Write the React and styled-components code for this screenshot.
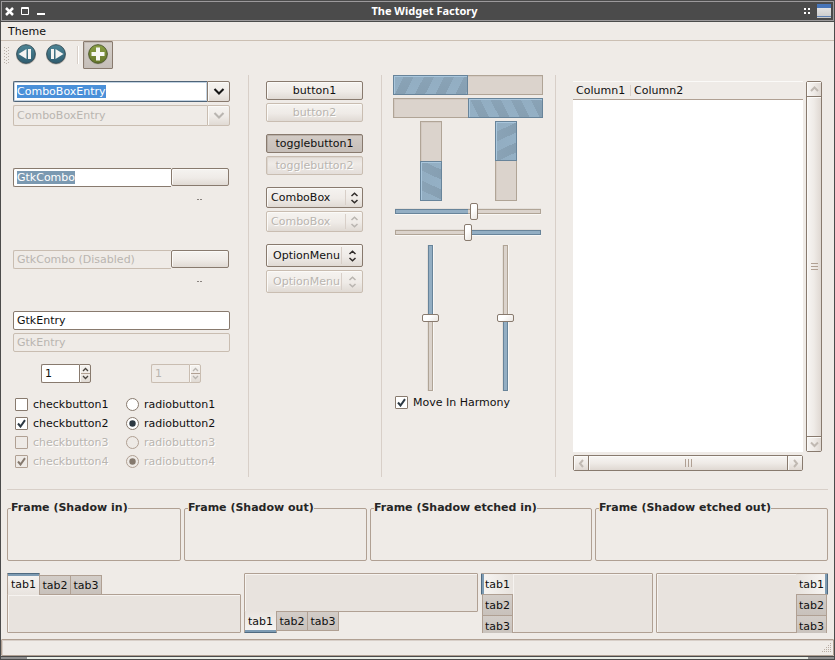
import React from "react";
import styled, { createGlobalStyle, css } from "styled-components";

const c = {
  bg: "#efebe7",
  frame: "#4b4b4b",
  edge: "#887a6e",
  edgeSoft: "#b0a093",
  edgeOff: "#c9bdb1",
  line: "#d8cfc8",
  off: "#b9b5b0",
  text: "#101010",
  blue: "#93aec3",
  blueEdge: "#68849a",
  trough: "#dbd3cc",
  troughEdge: "#b0a496",
};

const Global = createGlobalStyle`
  * { box-sizing: border-box; }
  body { margin: 0; background: ${c.bg}; }
  body, button, input, select, table {
    font-family: "DejaVu Sans", Verdana, sans-serif;
    font-size: 11px;
    line-height: 15px;
    color: ${c.text};
  }
  button, input, select { margin: 0; padding: 0; border: 0; outline: 0; opacity: 1; }
  svg { display: block; }
`;

const Window = styled.div`
  display: flex;
  flex-direction: column;
  min-height: 100vh;
  background: ${c.bg};
`;

const Inside = styled.div`
  flex: 1;
  display: flex;
  flex-direction: column;
  border: solid ${c.frame};
  border-width: 0 1px;
`;

/* ---------- title bar ---------- */

const TitleBar = styled.header`
  display: flex;
  align-items: center;
  height: 22px;
  padding: 0 2px 0 4px;
  background: ${c.frame};
  border: 1px solid ${c.frame};
  box-shadow: inset 0 0 0 1px #9c9a9c;
`;

const Title = styled.h1`
  flex: 1;
  margin: 0;
  padding-right: 4px;
  text-align: center;
  font: bold 11px/18px "Noto Sans", "Open Sans", sans-serif;
  color: #fff;
`;

const TitleButton = styled.button`
  display: flex;
  background: none;
  width: ${(p) => p.$w}px;
`;

/* ---------- menu and tool bar ---------- */

const MenuBar = styled.nav`
  display: flex;
  height: 19px;
  padding: 1px 7px;
  border-bottom: 1px solid #cbbfb3;
`;

const MenuItem = styled.button`
  background: none;
  font-size: 11px;
`;

const ToolBar = styled.div`
  display: flex;
  height: 29px;
  padding-left: 3px;
`;

const ToolButton = styled.button`
  width: 30px;
  display: flex;
  justify-content: center;
  background: none;
  height: 28px;
  padding-top: 2px;
  ${(p) =>
    p.$on &&
    css`
      padding-top: 1px;
      border: 1px solid ${c.edge};
      border-radius: 1px;
      background: linear-gradient(#d6d0cb, #c5beb8);
      box-shadow: inset 1px 1px 0 #c2bab3;
    `}
`;

const ToolSeparator = styled.div`
  width: 2px;
  height: 18px;
  margin: 5px 4px 0 6px;
  border-left: 1px solid ${c.line};
  border-right: 1px solid #fff;
`;

/* ---------- main area ---------- */

const Content = styled.main`
  flex: 1;
  display: flex;
  flex-direction: column;
  padding: 5px 6px 6px;
`;

const Columns = styled.div`
  flex: 1;
  display: grid;
  grid-template-columns: 241fr 1px 132fr 1px 173fr 1px 272fr;
`;

const Divider = styled.div`
  background: ${c.line};
`;

const Column = styled.section`
  display: flex;
  flex-direction: column;
  min-width: 0;
  gap: ${(p) => p.$gap || 0}px;
  padding: ${(p) => p.$pad};
`;

const Group = styled.div`
  display: flex;
  flex-direction: column;
  gap: 3px;
`;

const off = css`
  color: ${c.off};
  text-shadow: 1px 1px 0 #fff;
`;

const raised = css`
  border: 1px solid ${(p) => (p.disabled ? c.edgeOff : c.edge)};
  border-radius: 2px;
  background: linear-gradient(#f5f3f0, #efebe7 55%, #e0dad4);
  box-shadow: inset 1px 1px 0 #fbfaf8;
`;

const Field = styled.div`
  display: flex;
  align-items: center;
  flex: 1;
  min-width: 0;
  height: ${(p) => p.$h || 19}px;
  padding: 0 3px;
  border: 1px solid ${(p) => (p.$off ? c.edgeOff : p.$focus ? "#4f6478" : c.edge)};
  border-radius: 2px;
  background: ${(p) => (p.$off ? c.bg : "#fff")};
  ${(p) => p.$focus && css`box-shadow: inset 0 0 0 1px #c3d3e2;`}
  ${(p) => p.$joined && css`border-right: 0; border-radius: 2px 0 0 2px;`}
`;

const TextInput = styled.input`
  height: 13px;
  line-height: 13px;
  min-width: 0;
  flex: ${(p) => (p.$mark ? "none" : 1)};
  width: 100%;
  background: none;
  &:disabled { color: ${c.off}; }
  ${(p) =>
    p.$mark &&
    css`
      width: auto;
      field-sizing: content;
      background: ${p.$mark};
      color: #fff;
    `}
`;

const ComboRow = styled.div`
  display: flex;
`;

const ComboButton = styled.button`
  ${raised}
  display: grid;
  place-items: center;
  width: ${(p) => p.$w || 23}px;
  border-radius: 0 2px 2px 0;
`;

const LegacyCombo = styled.div`
  display: grid;
  grid-template-columns: 158fr 58fr;
  padding-right: 1px;
`;

const LegacyButton = styled.button`
  ${raised}
  height: 18px;
`;

const LegacyArrow = styled.div`
  grid-column: 2;
  display: flex;
  justify-content: center;
  padding-top: 12px;
`;

const SpinRow = styled.div`
  display: grid;
  grid-template-columns: 110px 50px;
  padding: 12px 28px 14px;
`;

const Spin = styled.div`
  display: flex;
  width: 50px;
`;

const Choices = styled.div`
  display: grid;
  grid-template-columns: 111px 1fr;
  row-gap: 4px;
  padding-left: 2px;
`;

const ChoiceLabel = styled.label`
  display: flex;
  align-items: center;
  gap: 5px;
  height: 15px;
  white-space: nowrap;
  ${(p) => p.$off && off}
`;

const MarkBox = styled.span`
  display: grid;
  place-items: center;
  width: 13px;
  height: 13px;
  > * { grid-area: 1 / 1; }
  > svg { pointer-events: none; }
`;

const ChoiceInput = styled.input`
  appearance: none;
  width: 13px;
  height: 13px;
  border: 1px solid ${c.edge};
  border-radius: ${(p) => (p.type === "radio" ? "50%" : "1px")};
  background: #fff;
  &:disabled { background: #eeeae6; border-color: ${c.edgeSoft}; }
`;

const Button = styled.button`
  ${raised}
  height: 19px;
  line-height: 16px;
  ${(p) => p.$on && css`
    background: linear-gradient(#d3ccc6, #c6beb8);
    box-shadow: inset 1px 1px 0 #b9b0a8;
  `}
  ${(p) => p.$pressed && css`
    background: linear-gradient(#e6e0db, #efebe7 40%, #e4deda);
    box-shadow: inset 1px 1px 0 #ddd6cf;
  `}
  ${(p) => p.disabled && off}
`;

const SelectBox = styled.div`
  ${raised}
  display: grid;
  grid-template-columns: 1fr auto;
  height: ${(p) => p.$h}px;
`;

const Select = styled.select`
  grid-area: 1 / 1 / 2 / 3;
  appearance: none;
  min-width: 0;
  padding-left: ${(p) => p.$indent}px;
  background: none;
  &:disabled { ${off} opacity: 1; }
`;

const SelectArrows = styled.span`
  grid-area: 1 / 2;
  display: grid;
  place-items: center;
  width: ${(p) => p.$w}px;
  margin: 2px 0;
  border-left: 1px solid ${c.line};
  pointer-events: none;
`;

/* ---------- progress bars and scales ---------- */

const stripes = {
  right: "117deg",
  left: "63deg",
  up: "25deg",
  down: "155deg",
};

const flow = { right: "row", left: "row-reverse", up: "column-reverse", down: "column" };

const Progress = styled.div`
  display: flex;
  flex-direction: ${(p) => flow[p.$dir]};
  width: ${(p) => (p.$tall ? "22px" : "100%")};
  height: ${(p) => (p.$tall ? 80 : 20)}px;
  background: ${c.trough};
  box-shadow: inset 0 0 0 1px ${c.troughEdge}, inset 2px 2px 0 #d3c9c1;
`;

const ProgressFill = styled.div`
  flex: 0 0 50%;
  border: 1px solid ${c.blueEdge};
  box-shadow: inset 1px 1px 0 #a9c6dc;
  background:
    linear-gradient(${(p) => (p.$tall ? "90deg" : "180deg")}, #8fa9bd66, transparent),
    repeating-linear-gradient(${(p) => stripes[p.$dir]}, #94b0c5 0 9px, #869fb2 9px 18px);
`;

const Pair = styled.div`
  display: grid;
  grid-template-columns: 1fr 1fr;
  justify-items: center;
`;

const Scale = styled.input`
  appearance: none;
  display: block;
  background-color: transparent;
  background-repeat: no-repeat;
  background-position: center;
  ${(p) =>
    p.$tall
      ? css`
          writing-mode: vertical-lr;
          width: 17px;
          height: 146px;
          background-image:
            linear-gradient(${p.$a} 50%, ${p.$b} 50%),
            linear-gradient(${p.$ae} 50%, ${p.$be} 50%),
            linear-gradient(90deg, #e2ddd8, #fbfaf8);
          background-size: 3px calc(100% - 2px), 5px 100%, 7px 100%;
        `
      : css`
          width: 100%;
          height: 17px;
          background-image:
            linear-gradient(90deg, ${p.$a} 50%, ${p.$b} 50%),
            linear-gradient(90deg, ${p.$ae} 50%, ${p.$be} 50%),
            linear-gradient(#e2ddd8, #fbfaf8);
          background-size: calc(100% - 2px) 3px, 100% 5px, 100% 7px;
        `}
  &::-webkit-slider-thumb {
    appearance: none;
    width: ${(p) => (p.$tall ? 17 : 8)}px;
    height: ${(p) => (p.$tall ? 8 : 17)}px;
    border: 1px solid ${c.edge};
    border-radius: 2px;
    background: linear-gradient(135deg, #fff 40%, #ebe6e1);
  }
`;

/* ---------- tree view ---------- */

const TreeGrid = styled.div`
  flex: 1;
  display: grid;
  grid-template-columns: 1fr 16px;
  grid-template-rows: 1fr 16px;
  gap: 3px;
`;

const TreePane = styled.div`
  min-height: 371px;
  background: #fff;
`;

const TreeTable = styled.table`
  width: 100%;
  border-collapse: collapse;
  background: ${c.bg};
  box-shadow: inset 0 1px 0 #fbfaf8, inset 0 -1px 0 ${c.edgeSoft};
`;

const Th = styled.th`
  height: 19px;
  padding: 0 0 0 3px;
  font-weight: normal;
  text-align: left;
  width: ${(p) => p.$w || "auto"};
  background: ${(p) =>
    p.$w ? `linear-gradient(${c.line}, ${c.line}) right center / 1px 11px no-repeat` : "none"};
`;

const ScrollBar = styled.div`
  display: flex;
  flex-direction: ${(p) => (p.$tall ? "column" : "row")};
  border: 1px solid ${c.edge};
  border-radius: 2px;
`;

const grad = (tall) =>
  `linear-gradient(${tall ? "90deg" : "180deg"}, #f7f5f3, #efebe7 50%, #dfd8d2)`;

const ScrollButton = styled.button`
  display: grid;
  place-items: center;
  flex: 0 0 14px;
  background: ${(p) => grad(p.$tall)};
  box-shadow: inset 1px 1px 0 #fbfaf8;
`;

const ScrollThumb = styled.div`
  flex: 1;
  display: grid;
  place-items: center;
  border: solid ${c.edge};
  border-width: ${(p) => (p.$tall ? "1px 0" : "0 1px")};
  background: ${(p) => grad(p.$tall)};
  box-shadow: inset 1px 1px 0 #fbfaf8;
`;

/* ---------- frames, notebooks, status ---------- */

const Rule = styled.hr`
  width: 100%;
  height: 1px;
  margin: 12px 0 10px;
  border: 0;
  background: ${c.line};
`;

const Frames = styled.div`
  display: grid;
  grid-template-columns: 174fr 183fr 222fr 233fr;
  gap: 3px;
`;

const Frame = styled.fieldset`
  min-width: 0;
  height: 61px;
  margin: 0;
  padding: 0 3px;
  border: 1px solid ${c.edgeSoft};
  border-radius: 2px;
`;

const Legend = styled.legend`
  padding: 0 0 2px;
  line-height: 15px;
  font-weight: bold;
  color: #262626;
  white-space: nowrap;
`;

const Notebooks = styled.div`
  display: grid;
  grid-template-columns: 234fr 234fr 172fr 172fr;
  gap: 3px;
  margin-top: 12px;
`;

const bookFlow = { top: "column", bottom: "column-reverse", left: "row", right: "row-reverse" };

const Notebook = styled.div`
  display: flex;
  flex-direction: ${(p) => bookFlow[p.$side]};
  height: 60px;
`;

const Page = styled.div`
  flex: 1;
  border: 1px solid ${c.edgeSoft};
  border-radius: 1px;
  background: #e8e3de;
  box-shadow: inset 1px 1px 0 #f6f3f0;
`;

const listSide = {
  top: css`align-items: flex-end; margin-bottom: -1px;`,
  bottom: css`align-items: flex-start; margin-top: -1px;`,
  left: css`flex-direction: column; align-items: flex-end; margin-right: -1px; overflow: hidden;`,
  right: css`flex-direction: column; align-items: flex-start; margin-left: -1px; overflow: hidden;`,
};

const TabList = styled.div`
  display: flex;
  z-index: 1;
  ${(p) => listSide[p.$side]}
`;

const opposite = { top: "bottom", bottom: "top", left: "right", right: "left" };

const accent = { top: "0 2px", bottom: "0 -2px", left: "2px 0", right: "-2px 0" };

const Tab = styled.button`
  flex: none;
  white-space: nowrap;
  border: 1px solid ${c.edgeSoft};
  background: linear-gradient(#d3cdc8, #c8c1bb);
  ${(p) => {
    const vertical = p.$side === "left" || p.$side === "right";
    const first = p.$on
      ? css`
          border-${p.$side}: 1px solid #4f6a80;
          border-${opposite[p.$side]}: 0;
          border-radius: 1px;
          background: linear-gradient(to ${opposite[p.$side]}, #f7f5f3, #e8e3de);
          box-shadow: inset ${accent[p.$side]} 0 #7d9bb3;
        `
      : "";
    return vertical
      ? css`
          width: ${p.$on ? 32 : 31}px;
          height: 22px;
          margin-top: ${p.$on ? 0 : -1}px;
          ${first}
        `
      : css`
          width: ${p.$on ? 33 : p.$after ? 31 : 32}px;
          height: ${p.$on ? 22 : 20}px;
          margin-right: ${p.$on ? 0 : -1}px;
          border-left-width: ${p.$after ? 0 : 1}px;
          ${first}
        `;
  }}
`;

const StatusBar = styled.footer`
  display: flex;
  justify-content: flex-end;
  align-items: flex-end;
  height: 17px;
  padding: 0 1px 1px 0;
  border: 1px solid ${c.edgeSoft};
  border-radius: 1px;
  box-shadow: inset 1px 1px 0 ${c.line};
`;

const ResizeEdge = styled.div`
  display: flex;
  justify-content: space-between;
  height: 4px;
  border: 1px solid ${c.frame};
  background: #e9ede6;
`;

const Corner = styled.span`
  width: 26px;
  background: #8f8f8f;
`;

/* ---------- drawings ---------- */

const paths = {
  up: "M1 5L4.500 1.500L8 5",
  down: "M1 1.500L4.500 5L8 1.500",
};

function Chevron({ dir = "down", tone = "#151515", w = 9, h = 7, stroke = 2 }) {
  return (
    <svg width={w} height={h} viewBox="0 0 9 7" aria-hidden="true">
      <path d={paths[dir]} fill="none" stroke={tone} strokeWidth={stroke} />
    </svg>
  );
}

function SideChevron({ dir }) {
  return (
    <svg width="7" height="9" viewBox="0 0 7 9" aria-hidden="true">
      <path d={dir === "left" ? "M5 1L2 4.500L5 8" : "M2 1L5 4.500L2 8"} fill="none" stroke="#c0b9b2" strokeWidth="2" />
    </svg>
  );
}

function UpDown({ tone, small }) {
  return small ? (
    <svg width="9" height="17" viewBox="0 0 9 17" aria-hidden="true">
      <path d="M2 6L4.500 3.500L7 6M2 11L4.500 13.500L7 11" fill="none" stroke={tone} strokeWidth="1.300" />
      <path d="M0 8.500H9" stroke={c.edgeSoft} />
    </svg>
  ) : (
    <svg width="9" height="12" viewBox="0 0 9 12" aria-hidden="true">
      <path d="M1.500 4L4.500 1.200L7.500 4M1.500 8L4.500 10.800L7.500 8" fill="none" stroke={tone} strokeWidth="1.500" />
    </svg>
  );
}

function ToolIcon({ kind }) {
  const green = kind === "add";
  const id = "orb-" + kind;
  return (
    <svg width="22" height="22" viewBox="0 0 22 22" aria-hidden="true">
      <defs>
        <linearGradient id={id} x1="0" y1="0" x2="0" y2="1">
          <stop offset="0" stopColor={green ? "#8ba044" : "#4d8596"} />
          <stop offset="1" stopColor={green ? "#64752a" : "#2f5d70"} />
        </linearGradient>
      </defs>
      <ellipse cx="11" cy="12" rx="10" ry="9.500" fill="#b8b2ab" />
      <circle cx="11" cy="11" r="9.300" fill={`url(#${id})`} stroke={green ? "#4e5a2b" : "#35505b"} />
      {kind === "back" && (
        <g fill="#f4f4f2"><path d="M11.500 6V16L3.500 11Z" /><rect x="13" y="6" width="3" height="10" /></g>
      )}
      {kind === "forward" && (
        <g fill="#f4f4f2"><path d="M10.500 6V16L18.500 11Z" /><rect x="6" y="6" width="3" height="10" /></g>
      )}
      {green && <path d="M9 4.500H13V9H17.500V13H13V17.500H9V13H4.500V9H9Z" fill="#f7f7f3" />}
    </svg>
  );
}

function DotHandle() {
  const rows = [0, 3, 6, 9, 12, 15];
  return (
    <svg width="6" height="18" viewBox="0 0 6 18" aria-hidden="true">
      {rows.map((y) => (
        <g key={y} fill="#b9b0a8">
          <rect x="0" y={y} width="1" height="1" />
          <rect x="4" y={y} width="1" height="1" />
          <rect x="2" y={y + 1} width="1" height="1" />
        </g>
      ))}
    </svg>
  );
}

const HandleArea = styled.div`
  width: 7px;
  padding-top: 6px;
`;

const Grip = ({ tall }) => (
  <svg width={tall ? 7 : 9} height="8" aria-hidden="true">
    <path
      d={tall ? "M0 .5H7M0 3.500H7M0 6.500H7" : "M1.500 0V8M4.500 0V8M7.500 0V8"}
      stroke={c.edgeSoft}
    />
  </svg>
);

function ResizeGrip() {
  const dots = [];
  for (let r = 0; r < 5; r++) for (let k = 0; k <= r; k++) dots.push([10 - k * 2, r * 2 + 1]);
  return (
    <svg width="12" height="12" viewBox="0 0 12 12" aria-hidden="true">
      {dots.map(([x, y]) => (
        <rect key={x + "-" + y} x={x} y={y} width="1" height="1" fill="#b9aea4" />
      ))}
    </svg>
  );
}

/* ---------- composed parts ---------- */

function Choice({ type = "checkbox", name, checked, disabled, children }) {
  const tone = disabled ? "#85796e" : "#2d3943";
  return (
    <ChoiceLabel $off={disabled}>
      <MarkBox>
        <ChoiceInput type={type} name={name} defaultChecked={checked} disabled={disabled} />
        {checked &&
          (type === "radio" ? (
            <svg width="7" height="7" aria-hidden="true"><circle cx="3.500" cy="3.500" r="3.200" fill={tone} /></svg>
          ) : (
            <svg width="9" height="9" viewBox="0 0 9 9" aria-hidden="true">
              <path d="M1 4.500L3.500 7.500L8 1.200" fill="none" stroke={tone} strokeWidth="2" />
            </svg>
          ))}
      </MarkBox>
      {children}
    </ChoiceLabel>
  );
}

function Combo({ value, disabled, focus }) {
  return (
    <ComboRow>
      <Field $h={21} $off={disabled} $focus={focus} $joined>
        <TextInput aria-label={value} defaultValue={value} disabled={disabled} $mark={focus && "#4a90d9"} />
      </Field>
      <ComboButton disabled={disabled} aria-label="Open list">
        <Chevron tone={disabled ? c.off : "#151515"} w={12} h={9} stroke={1.6} />
      </ComboButton>
    </ComboRow>
  );
}

function OldCombo({ value, disabled, mark }) {
  return (
    <LegacyCombo>
      <Field $off={disabled} $joined>
        <TextInput aria-label={value} defaultValue={value} disabled={disabled} $mark={mark} />
      </Field>
      <LegacyButton aria-label="Open list" />
      <LegacyArrow>
        <svg width="6" height="2" aria-hidden="true"><path d="M0 .5H2M3 .5H5" stroke="#8a8480" /></svg>
      </LegacyArrow>
    </LegacyCombo>
  );
}

function SpinBox({ disabled }) {
  return (
    <Spin>
      <Field $off={disabled} $joined>
        <TextInput aria-label="Amount" defaultValue="1" inputMode="numeric" disabled={disabled} />
      </Field>
      <ComboButton $w={12} disabled={disabled} aria-label="Step">
        <UpDown small tone={disabled ? c.off : "#4a4540"} />
      </ComboButton>
    </Spin>
  );
}

function Picker({ value, disabled, h, indent, arrows }) {
  return (
    <SelectBox $h={h} disabled={disabled}>
      <Select aria-label={value} disabled={disabled} $indent={indent}>
        <option>{value}</option>
      </Select>
      <SelectArrows $w={arrows}>
        <UpDown tone={disabled ? c.off : "#302c2a"} />
      </SelectArrows>
    </SelectBox>
  );
}

function Bar({ dir, tall }) {
  return (
    <Progress $dir={dir} $tall={tall} role="progressbar" aria-valuenow={50}>
      <ProgressFill $dir={dir} $tall={tall} />
    </Progress>
  );
}

const filled = { $a: c.blue, $b: c.trough, $ae: c.blueEdge, $be: c.troughEdge };
const inverse = { $a: c.trough, $b: c.blue, $ae: c.troughEdge, $be: c.blueEdge };

function Book({ side }) {
  return (
    <Notebook $side={side}>
      <TabList $side={side} role="tablist">
        <Tab $side={side} $on role="tab" aria-selected="true">tab1</Tab>
        <Tab $side={side} $after role="tab">tab2</Tab>
        <Tab $side={side} role="tab">tab3</Tab>
      </TabList>
      <Page role="tabpanel" />
    </Notebook>
  );
}

const ScaleStack = styled.div`
  display: flex;
  flex-direction: column;
  gap: 4px;
  padding: 2px 2px 4px;
`;

const HarmonyRow = styled.div`
  padding: 4px 2px 0;
`;

const frames = ["Frame (Shadow in)", "Frame (Shadow out)", "Frame (Shadow etched in)", "Frame (Shadow etched out)"];

export default function App() {
  return (
    <Window>
      <Global />
      <TitleBar>
        <TitleButton $w={16} aria-label="Close">
          <svg width="9" height="9"><path d="M1 1L8 8M8 1L1 8" stroke="#fff" strokeWidth="2.500" /></svg>
        </TitleButton>
        <TitleButton $w={16} aria-label="Maximize">
          <svg width="9" height="9"><path d="M.5 .5H7.500V7.500H.5ZM0 1.500H8" fill="none" stroke="#fff" /></svg>
        </TitleButton>
        <TitleButton $w={12} aria-label="Minimize">
          <svg width="9" height="9"><path d="M0 7H8" stroke="#fff" strokeWidth="2" /></svg>
        </TitleButton>
        <Title>The Widget Factory</Title>
        <TitleButton $w={13} aria-label="All desktops">
          <svg width="7" height="7"><path d="M0 1H2M4 1H6M0 5H2M4 5H6" stroke="#fff" strokeWidth="2" /></svg>
        </TitleButton>
        <TitleButton $w={15} aria-label="Window menu">
          <svg width="14" height="14">
            <defs>
              <linearGradient id="pane" x1="0" y1="0" x2="0" y2="1">
                <stop offset="0" stopColor="#ececec" />
                <stop offset="1" stopColor="#c9c9c9" />
              </linearGradient>
            </defs>
            <rect width="14" height="14" fill="url(#pane)" />
            <rect width="14" height="4" fill="#4674b8" />
            <rect y="12" width="14" height="1" fill="#5f82b4" />
          </svg>
        </TitleButton>
      </TitleBar>

      <Inside>
        <MenuBar><MenuItem>Theme</MenuItem></MenuBar>
        <ToolBar>
          <HandleArea><DotHandle /></HandleArea>
          <ToolButton aria-label="Back"><ToolIcon kind="back" /></ToolButton>
          <ToolButton aria-label="Forward"><ToolIcon kind="forward" /></ToolButton>
          <ToolSeparator />
          <ToolButton $on aria-label="Add" aria-pressed="true"><ToolIcon kind="add" /></ToolButton>
        </ToolBar>

        <Content>
          <Columns>
            <Column $pad="6px 18px 6px 6px">
              <Group>
                <Combo value="ComboBoxEntry" focus />
                <Combo value="ComboBoxEntry" disabled />
              </Group>
              <Column $pad="42px 0 0" $gap={49}>
                <OldCombo value="GtkCombo" mark="#7b99b1" />
                <OldCombo value="GtkCombo (Disabled)" disabled />
              </Column>
              <Column $pad="28px 0 0" $gap={3}>
                <ComboRow><Field><TextInput aria-label="Entry" defaultValue="GtkEntry" /></Field></ComboRow>
                <ComboRow><Field $off><TextInput aria-label="Entry, disabled" defaultValue="GtkEntry" disabled /></Field></ComboRow>
              </Column>
              <SpinRow>
                <SpinBox />
                <SpinBox disabled />
              </SpinRow>
              <Choices>
                <Choice>checkbutton1</Choice>
                <Choice type="radio" name="live">radiobutton1</Choice>
                <Choice checked>checkbutton2</Choice>
                <Choice type="radio" name="live" checked>radiobutton2</Choice>
                <Choice disabled>checkbutton3</Choice>
                <Choice type="radio" name="idle" disabled>radiobutton3</Choice>
                <Choice checked disabled>checkbutton4</Choice>
                <Choice type="radio" name="idle" checked disabled>radiobutton4</Choice>
              </Choices>
            </Column>
            <Divider />
            <Column $pad="6px 18px 6px 17px" $gap={12}>
              <Group>
                <Button>button1</Button>
                <Button disabled>button2</Button>
              </Group>
              <Group>
                <Button $on aria-pressed="true">togglebutton1</Button>
                <Button disabled $pressed>togglebutton2</Button>
              </Group>
              <Group>
                <Picker value="ComboBox" h={21} indent={4} arrows={17} />
                <Picker value="ComboBox" h={21} indent={4} arrows={17} disabled />
              </Group>
              <Group>
                <Picker value="OptionMenu" h={23} indent={6} arrows={21} />
                <Picker value="OptionMenu" h={23} indent={6} arrows={21} disabled />
              </Group>
            </Column>
            <Divider />
            <Column $pad="0 12px 0 11px">
              <Group>
                <Bar dir="right" />
                <Bar dir="left" />
                <Pair>
                  <Bar dir="up" tall />
                  <Bar dir="down" tall />
                </Pair>
              </Group>
              <ScaleStack>
                <Scale type="range" aria-label="Level" defaultValue="54" {...filled} />
                <Scale type="range" aria-label="Level, inverted" defaultValue="50" {...inverse} />
              </ScaleStack>
              <Pair>
                <Scale type="range" aria-label="Height" defaultValue="50" $tall {...filled} />
                <Scale type="range" aria-label="Height, inverted" defaultValue="50" $tall {...inverse} />
              </Pair>
              <HarmonyRow><Choice checked>Move In Harmony</Choice></HarmonyRow>
            </Column>
            <Divider />
            <Column $pad="6px 6px 6px 17px">
              <TreeGrid>
                <TreePane>
                  <TreeTable>
                    <thead><tr><Th $w="58px">Column1</Th><Th>Column2</Th></tr></thead>
                  </TreeTable>
                </TreePane>
                <ScrollBar $tall>
                  <ScrollButton $tall aria-label="Scroll up"><Chevron dir="up" tone="#c0b9b2" /></ScrollButton>
                  <ScrollThumb $tall><Grip tall /></ScrollThumb>
                  <ScrollButton $tall aria-label="Scroll down"><Chevron tone="#c0b9b2" /></ScrollButton>
                </ScrollBar>
                <ScrollBar>
                  <ScrollButton aria-label="Scroll left"><SideChevron dir="left" /></ScrollButton>
                  <ScrollThumb><Grip /></ScrollThumb>
                  <ScrollButton aria-label="Scroll right"><SideChevron dir="right" /></ScrollButton>
                </ScrollBar>
              </TreeGrid>
            </Column>
          </Columns>

          <Rule />
          <Frames>
            {frames.map((f) => (
              <Frame key={f}><Legend>{f}</Legend></Frame>
            ))}
          </Frames>
          <Notebooks>
            <Book side="top" />
            <Book side="bottom" />
            <Book side="left" />
            <Book side="right" />
          </Notebooks>
        </Content>
        <StatusBar><ResizeGrip /></StatusBar>
      </Inside>
      <ResizeEdge><Corner /><Corner /></ResizeEdge>
    </Window>
  );
}
